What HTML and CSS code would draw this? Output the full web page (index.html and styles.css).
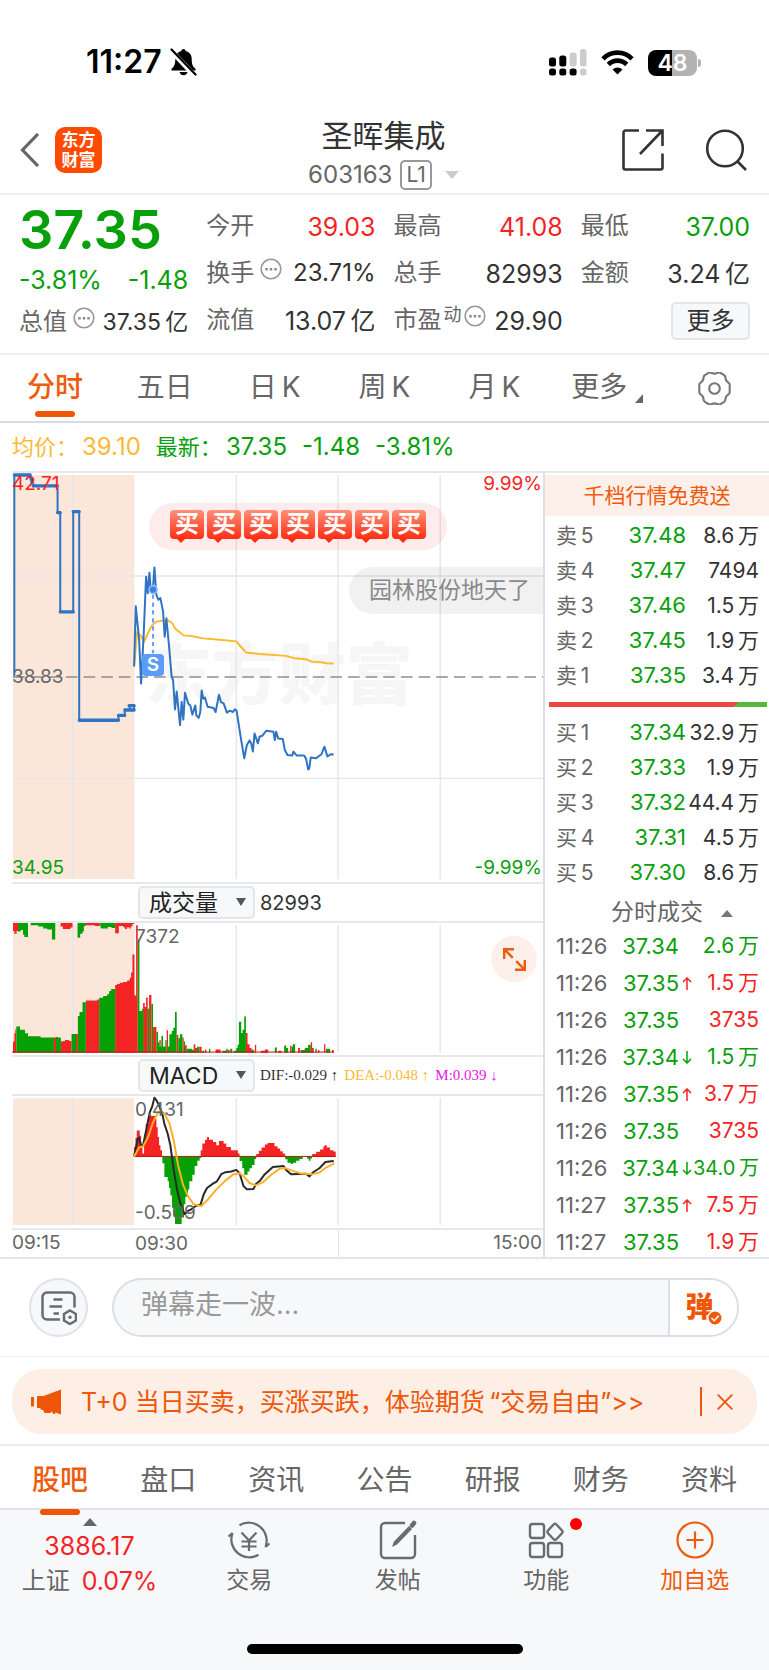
FILE: index.html
```html
<!DOCTYPE html>
<html lang="zh-CN">
<head>
<meta charset="utf-8">
<meta name="viewport" content="width=device-width, initial-scale=1">
<title>圣晖集成 603163</title>
<link rel="stylesheet" href="styles.css">
</head>
<body>
<div class="app">

<div class="status">
  <div class="status-left">
    <span class="clock">11:27</span>
    <svg class="bell" width="27" height="28" viewBox="0 0 27 28"><path d="M13.500 1c1.300 0 2 .8 2.200 1.900 4 1 6 4.100 6 8.100 0 5 1 7.500 3.600 9.700.8.900.4 1.800-.8 1.800H2.500c-1.200 0-1.600-.9-.8-1.800C4.300 18.500 5.300 16 5.300 11c0-4 2-7.100 6-8.100C11.500 1.800 12.200 1 13.500 1z"/><path d="M9.500 24h8c-.5 2-2 3.300-4 3.300s-3.500-1.300-4-3.300z"/><path d="M0 1.500 25 28" stroke="#fff" stroke-width="5"/><path d="M1.500 1.500 25.500 26.500" stroke="#000" stroke-width="2.200" stroke-linecap="round"/></svg>
  </div>
  <div class="status-right">
    <svg width="38" height="27" viewBox="0 0 38 27"><g fill="#000"><rect y="8.500" width="7" height="9" rx="2.500"/><rect x="10.300" y="6.500" width="7" height="11" rx="2.500"/><rect y="19.500" width="7" height="7" rx="2.500"/><rect x="10.300" y="19.500" width="7" height="7" rx="2.500"/><rect x="20.600" y="19.500" width="7" height="7" rx="2.500"/></g><g fill="#ccc"><rect x="20.600" y="3.500" width="7" height="14" rx="2.500"/><rect x="31" y="0" width="6.500" height="17.500" rx="2.500"/><rect x="31" y="19.500" width="6.500" height="7" rx="2.500"/></g></svg>
    <svg width="33" height="25" viewBox="0 0 33 25" fill="none" stroke="#000" stroke-width="4.600"><path d="M2 8.800C10 .6 23 .6 31 8.800"/><path d="M7.300 14.500c5.200-5.200 13.200-5.200 18.400 0"/><path d="M16.500 24.500l-5-5c2.800-2.800 7.200-2.800 10 0z" fill="#000" stroke="none"/></svg>
    <div class="battery"><span class="battery-text">48</span></div>
  </div>
</div>

<header class="header">
  <div class="header-side">
    <button class="icon-btn back" aria-label="返回"><svg width="20" height="34" viewBox="0 0 20 34" fill="none" stroke="#666" stroke-width="3.200"><path d="M18 1 2.500 17 18 33"/></svg></button>
    <a class="logo" href="#"><span>东方</span><span>财富</span></a>
  </div>
  <div class="header-title">
    <h1>圣晖集成</h1>
    <div class="code"><span>603163</span><span class="level">L1</span><svg width="14" height="8" viewBox="0 0 14 8"><path d="M0 0h14L7 8z" fill="#ccc"/></svg></div>
  </div>
  <div class="header-side header-actions">
    <button class="icon-btn" aria-label="分享"><svg width="42" height="42" viewBox="0 0 42 42" fill="none" stroke="#333" stroke-width="2.600"><path d="M17 1.500H3.500a2 2 0 0 0-2 2v35a2 2 0 0 0 2 2h35a2 2 0 0 0 2-2V24.500"/><path d="M24 1.500h16.500V17M40.500 1.500 18 25"/></svg></button>
    <button class="icon-btn" aria-label="搜索"><svg width="41" height="42" viewBox="0 0 41 42" fill="none" stroke="#333" stroke-width="2.600"><circle cx="19" cy="19.500" r="17.800"/><path d="m31 32 9 9"/></svg></button>
  </div>
</header>

<section class="quote">
  <div class="quote-main">
    <strong class="price">37.35</strong>
    <div class="pair change"><span>-3.81%</span><span>-1.48</span></div>
    <div class="pair"><span class="k">总值<svg class="dots" width="22" height="22" viewBox="0 0 22 22"><circle cx="11" cy="11" r="9.800" fill="none" stroke="#999" stroke-width="1.600"/><path d="M5.300 10h2.400v2.400H5.300zm4.500 0h2.400v2.400H9.800zm4.500 0h2.400v2.400h-2.400z" fill="#888"/></svg></span><span class="small">37.35&thinsp;亿</span></div>
  </div>
  <div class="quote-col">
    <div class="pair"><span class="k">今开</span><span class="up">39.03</span></div>
    <div class="pair"><span class="k">换手<svg class="dots" width="22" height="22" viewBox="0 0 22 22"><circle cx="11" cy="11" r="9.800" fill="none" stroke="#999" stroke-width="1.600"/><path d="M5.300 10h2.400v2.400H5.300zm4.500 0h2.400v2.400H9.800zm4.500 0h2.400v2.400h-2.400z" fill="#888"/></svg></span><span class="small">23.71%</span></div>
    <div class="pair"><span class="k">流值</span><span>13.07&thinsp;亿</span></div>
  </div>
  <div class="quote-col">
    <div class="pair"><span class="k">最高</span><span class="up">41.08</span></div>
    <div class="pair"><span class="k">总手</span><span>82993</span></div>
    <div class="pair"><span class="k">市盈<sup>动</sup><svg class="dots" width="22" height="22" viewBox="0 0 22 22"><circle cx="11" cy="11" r="9.800" fill="none" stroke="#999" stroke-width="1.600"/><path d="M5.300 10h2.400v2.400H5.300zm4.500 0h2.400v2.400H9.800zm4.500 0h2.400v2.400h-2.400z" fill="#888"/></svg></span><span>29.90</span></div>
  </div>
  <div class="quote-col">
    <div class="pair"><span class="k">最低</span><span class="down">37.00</span></div>
    <div class="pair"><span class="k">金额</span><span>3.24&thinsp;亿</span></div>
    <div class="pair end"><button class="more">更多</button></div>
  </div>
</section>

<nav class="periods">
  <button class="period active">分时</button>
  <button class="period">五日</button>
  <button class="period">日&thinsp;K</button>
  <button class="period">周&thinsp;K</button>
  <button class="period">月&thinsp;K</button>
  <button class="period">更多<svg class="corner" width="8" height="9" viewBox="0 0 8 9"><path d="M8 0v9H0z" fill="#666"/></svg></button>
  <button class="period" aria-label="设置"><svg width="33" height="33" viewBox="2 2 28 28" fill="none" stroke="#777" stroke-width="1.800"><path d="M11.200 2.600c1.600-.9 2.700.8 4.800.8s3.200-1.700 4.800-.8l3.400 2c1.600 1 .7 2.700 1.700 4.500s3 1.800 3 3.700v6.400c0 1.900-2 1.900-3 3.700s-.1 3.500-1.700 4.500l-3.400 2c-1.600.9-2.700-.8-4.800-.8s-3.200 1.700-4.800.8l-3.400-2c-1.600-1-.7-2.700-1.700-4.500s-3-1.800-3-3.700v-6.400c0-1.900 2-1.900 3-3.700s.1-3.500 1.700-4.500z"/><circle cx="16" cy="16" r="4.500"/></svg></button>
</nav>

<div class="legend">
  <span class="pairing avg"><span class="legend-name">均价：</span>39.10</span><span class="pairing"><span class="legend-name">最新：</span>37.35</span><span>-1.48</span><span>-3.81%</span>
</div>

<main class="market">
  <div class="charts">
    <div class="chart chart-price">
      <div class="watermark">东方财富</div>
      <svg viewBox="36 156 1596 1239" preserveAspectRatio="none">
        <path class="preopen" d="M39 162H404V1386H39z"/>
        <path class="grid" d="M219 162V1386M710 162V1386M1016 162V1386M1323 162V1386M39 468H1632M39 1081H1632"/>
        <path d="M39 774H1632" stroke="#8e8e8e" stroke-width="5" stroke-dasharray="35 18" fill="none"/>
        <path class="avg-line" d="M403 742 412 640 424 650 432 668 455 620 468 607 490 603 505 603 517 610 527 628 552 648 575 650 610 657 660 661 710 666 722 680 740 700 780 704 860 710 885 717 920 720 935 727 965 729 980 732 1003 733"/>
        <path class="price-line" d="M43 772V162H90L100 195H173V276H181V577H220V273H238V905H356V890H375V874H390V862H403M390 874H403V857"/>
        <path class="price-dots" d="M43 162H90L100 195H173M173 276H181M181 577H220M220 273H238M238 905H356M356 890H375M375 874H403M388 861H403"/>
        <path class="price-line" d="M403 742 408 560 418 660 424 794 432 640 439 470 444 520 449 458 453 510 460 500 464 442 470 525 476 540 482 535 490 575 495 652 500 596 508 680 516 775 520 782 526 872 531 818 541 920 546 850 551 903 556 822 566 855 572 860 578 888 587 860 590 890 597 898 602 880 606 815 611 840 616 836 624 864 642 868 648 880 658 828 664 850 672 854 682 882 690 876 700 880 706 872 711 876 724 960 734 1020 742 980 750 966 755 975 760 1000 765 945 775 975 780 955 788 952 800 937 822 940 826 965 830 940 836 960 850 962 856 995 864 1010 878 1012 882 1000 892 1012 914 1012 920 1022 926 1054 929 1052 934 1018 950 1020 966 1008 975 985 984 1015 994 1008 1003 1009"/>
        <path d="M460 524V702" stroke="#5f9ff5" stroke-width="6" stroke-dasharray="13 11" fill="none"/>
        <circle cx="460" cy="509" r="12" fill="#3a82e8" stroke="#8fbcfa" stroke-width="5"/>
      </svg>
      <span class="lab tl up">42.71</span><span class="lab tr up">9.99%</span>
      <span class="lab ml">38.83</span>
      <span class="lab bl down">34.95</span><span class="lab br down">-9.99%</span>
      <span class="sell-mark">S</span>
      <div class="bullet bullet-red"><b>买</b><b>买</b><b>买</b><b>买</b><b>买</b><b>买</b><b>买</b></div>
      <div class="bullet bullet-gray">园林股份地天了</div>
    </div>

    <div class="tool">
      <select class="pick" aria-label="指标一"><option>成交量</option></select>
      <span class="tool-value">82993</span>
    </div>

    <div class="chart chart-volume">
      <svg viewBox="36 549 1596 402" preserveAspectRatio="none">
        <path class="preopen" d="M39 552H404V944H39z"/>
        <path class="grid" d="M219 552V944M710 556V944M1016 556V944M1323 556V944"/>
        <path class="r" d="M39 549H54V573H50V582H43V573H39zM182 549H218V563H212V567H189V560H182zM256 549H300V558H285V556H256zM346 549H403V552H398V560H393V566H388V562H382V567H376V562H370V558H357V580H346zM39 944V910H43V885H46V873H49V944zM56 944V866H59V944zM162 944V898H168V896H174V901H178V944zM183 944V909H195V905H208V908H215V944zM228 944V887H234V944zM258 944V785H292V782H298V944zM346 944V738H352V735H360V731H370V729H382V724H390V716H394V700H398V645H404V770H409V944zM409 944V556H414V944zM430 944V793H435V805H439V776H444V944zM448 944V768H455V944zM460 944V866H470V944zM479 944V905H483V944zM501 944V876H505V944zM531 944V890H536V944zM540 944V901H543V944zM548 944V898H552V944zM556 944V921H561V944zM582 944V918H587V930H592V944zM600 944V926H606V944zM616 944V934H620V944zM648 944V934H663V944zM684 944V936H690V944zM738 944V884H744V918H750V930H756V938H764V944zM766 944V920H770V944zM784 944V938H796V934H806V944zM836 944V938H846V944zM872 944V922H876V944zM896 944V930H902V944zM934 944V912H938V930H943V944zM956 944V936H960V944zM974 944V918H978V944zM998 944V936H1003V944z"/>
        <path class="g" d="M54 549H84V592H73V585H69V570H62V575H54zM92 549H166V599H156V569H142V566H130V560H115V556H92zM233 549H257V559H252V575H248V582H241V594H233zM300 549H346V564H335V561H324V566H303zM49 944V864H60V874H75V885H84V894H122V898H162V944zM168 944V898H183V944zM215 944V887H229V944zM234 944V832H239V820H248V790H258V944zM298 944V777H310V771H322V766H328V756H334V750H346V944zM414 944V600H419V817H427V810H431V944zM443 944V810H448V944zM455 944V796H460V944zM470 944V880H475V912H479V926H485V893H490V925H497V905H501V944zM505 944V925H509V888H516V878H521V868H526V820H531V944zM536 944V900H541V888H548V944zM552 944V910H556V944zM561 944V932H578V936H584V944zM592 944V926H600V944zM608 944V938H614V944zM628 944V932H632V944zM668 944V938H680V932H684V944zM692 944V932H698V944zM702 944V938H710V930H714V920H718V850H725V884H729V874H734V834H739V944zM756 944V934H762V944zM826 944V928H832V944zM854 944V922H860V930H866V944zM876 944V926H880V918H887V944zM904 944V936H916V930H926V920H934V944zM948 944V932H952V944zM980 944V932H992V944z"/>
        <path d="M36 942H1003" stroke="#c00d0d" stroke-width="3"/>
      </svg>
      <span class="lab open-top">7372</span>
      <button class="expand" aria-label="全屏"><svg width="23" height="23" viewBox="0 0 23 23" fill="none" stroke="#ef5b0c" stroke-width="2.400"><path d="M1.200 11V1.200H11M1.200 1.200l8.600 8.600M21.800 12v9.800H12M21.800 21.800l-8.600-8.600"/></svg></button>
    </div>

    <div class="tool">
      <select class="pick" aria-label="指标二"><option>MACD</option></select>
      <span class="macd-values"><span>DIF:-0.029 ↑</span><span class="avg">DEA:-0.048 ↑</span><span class="mag">M:0.039 ↓</span></span>
    </div>

    <div class="chart chart-macd">
      <svg viewBox="-324 15 1596 402" preserveAspectRatio="none">
        <path class="preopen" d="M-321 22H43V408H-321z"/>
        <path class="grid" d="M-141 22V408M350 22V408M656 22V408M963 22V408"/>
        <path class="r" d="M43 200V170H47V142H51V120H60V136H64V170H68V190H73V140H78V100H86V71H94V76H106V85H110V110H114V140H118V165H122V180H127V200zM243 200V180H248V160H256V148H262V140H268V148H280V155H290V165H298V152H312V160H320V170H334V180H355V190H360V200zM410 200V192H418V182H426V172H436V163H444V158H465V168H474V175H482V183H490V190H497V200zM578 200V192H590V185H602V178H612V168H616V165H622V172H632V180H642V184H649V200z"/>
        <path class="g" d="M128 199V220H134V262H144V275H148V295H152V318H157V355H161V382H166V405H186V385H193V345H197V322H205V300H209V275H218V255H225V228H233V212H240V204H245V199zM360 199V213H368V235H374V255H384V245H390V235H397V225H405V207H410V199zM497 199V208H504V218H514V222H520V218H530V212H540V207H550V199zM563 199V206H568V212H573V205H578V199z"/>
        <path d="M43 199H649" stroke="#c01010" stroke-width="3"/>
        <path class="dif" d="M43 199 50 165 54 145 58 142 64 165 70 165 78 125 90 65 98 45 104 20 110 28 120 48 128 70 134 100 144 130 152 165 162 240 172 300 184 350 195 375 205 365 215 360 228 350 243 345 252 315 262 295 280 282 292 275 305 253 318 247 335 245 350 240 360 250 372 290 382 299 402 298 410 282 422 272 436 253 460 231 492 228 500 240 515 253 560 252 570 260 580 248 600 235 618 216 643 213"/>
        <path class="dea" d="M43 199 58 172 70 168 85 140 100 95 115 65 125 62 135 70 150 100 162 150 175 225 190 285 205 320 222 345 245 350 265 330 290 300 315 275 340 254 360 250 375 262 390 280 408 287 430 278 455 255 480 237 495 234 520 243 545 251 580 253 600 248 620 233 645 220"/>
      </svg>
      <span class="lab open-top">0.431</span><span class="lab open-bottom">-0.509</span>
    </div>
    <div class="axis"><span class="axis-a">09:15</span><span class="axis-b">09:30</span><span class="axis-c">15:00</span></div>
  </div>

  <aside class="book">
    <a class="promo" href="#">千档行情免费送</a>
    <table class="depth">
      <tr><th>卖&thinsp;5</th><td class="down">37.48</td><td>8.6&thinsp;万</td></tr>
      <tr><th>卖&thinsp;4</th><td class="down">37.47</td><td>7494</td></tr>
      <tr><th>卖&thinsp;3</th><td class="down">37.46</td><td>1.5&thinsp;万</td></tr>
      <tr><th>卖&thinsp;2</th><td class="down">37.45</td><td>1.9&thinsp;万</td></tr>
      <tr><th>卖&thinsp;1</th><td class="down">37.35</td><td>3.4&thinsp;万</td></tr>
    </table>
    <div class="ratio"></div>
    <table class="depth">
      <tr><th>买&thinsp;1</th><td class="down">37.34</td><td>32.9&thinsp;万</td></tr>
      <tr><th>买&thinsp;2</th><td class="down">37.33</td><td>1.9&thinsp;万</td></tr>
      <tr><th>买&thinsp;3</th><td class="down">37.32</td><td>44.4&thinsp;万</td></tr>
      <tr><th>买&thinsp;4</th><td class="down">37.31</td><td>4.5&thinsp;万</td></tr>
      <tr><th>买&thinsp;5</th><td class="down">37.30</td><td>8.6&thinsp;万</td></tr>
    </table>
    <button class="ticks-head">分时成交<svg width="12" height="7" viewBox="0 0 12 7"><path d="M6 0l6 7H0z" fill="#777"/></svg></button>
    <table class="ticks">
      <tr><th>11:26</th><td class="down">37.34</td><td></td><td class="down">2.6&thinsp;万</td></tr>
      <tr><th>11:26</th><td class="down">37.35</td><td class="up"><svg class="arr" viewBox="0 0 10 13"><path d="M5 13V1M1 5l4-4 4 4"/></svg></td><td class="up">1.5&thinsp;万</td></tr>
      <tr><th>11:26</th><td class="down">37.35</td><td></td><td class="up">3735</td></tr>
      <tr><th>11:26</th><td class="down">37.34</td><td class="down"><svg class="arr" viewBox="0 0 10 13"><path d="M5 0v12M1 8l4 4 4-4"/></svg></td><td class="down">1.5&thinsp;万</td></tr>
      <tr><th>11:26</th><td class="down">37.35</td><td class="up"><svg class="arr" viewBox="0 0 10 13"><path d="M5 13V1M1 5l4-4 4 4"/></svg></td><td class="up">3.7&thinsp;万</td></tr>
      <tr><th>11:26</th><td class="down">37.35</td><td></td><td class="up">3735</td></tr>
      <tr><th>11:26</th><td class="down">37.34</td><td class="down"><svg class="arr" viewBox="0 0 10 13"><path d="M5 0v12M1 8l4 4 4-4"/></svg></td><td class="down long">34.0&thinsp;万</td></tr>
      <tr><th>11:27</th><td class="down">37.35</td><td class="up"><svg class="arr" viewBox="0 0 10 13"><path d="M5 13V1M1 5l4-4 4 4"/></svg></td><td class="up">7.5&thinsp;万</td></tr>
      <tr><th>11:27</th><td class="down">37.35</td><td></td><td class="up">1.9&thinsp;万</td></tr>
    </table>
  </aside>
</main>

<section class="comment">
  <button class="round" aria-label="弹幕设置"><svg width="36" height="34" viewBox="0 0 36 34" fill="none" stroke="#6b6b6b" stroke-width="2.500"><path d="M19 28.500H6a4.500 4.500 0 0 1-4.500-4.500V6A4.500 4.500 0 0 1 6 1.500h23A4.500 4.500 0 0 1 33.500 6v10.500"/><path d="M12.500 8.500h9M8.500 15.500h12.500M12.500 22.500H18"/><path d="m29 19.500 6 3.500v6.500L29 33l-6-3.500V23z"/><circle cx="29" cy="26.200" r="1" fill="#6b6b6b" stroke-width="1.500"/></svg></button>
  <div class="field">
    <input type="text" placeholder="弹幕走一波..." aria-label="弹幕">
    <button class="danmu" aria-label="弹幕开关">弹<svg width="16" height="16" viewBox="0 0 16 16"><circle cx="8" cy="8" r="7.200" fill="#ef5b0c" stroke="#fff" stroke-width="1.400"/><path d="m4.500 8 2.700 2.700 4.500-5" stroke="#fff" stroke-width="1.600" fill="none"/></svg></button>
  </div>
</section>

<section class="banner-wrap">
  <div class="banner">
    <svg width="31" height="26" viewBox="0 0 31 26" fill="#ef5607"><path d="M0 8h3v9.500H0zM6 7h6.500L30 .5v25l-5.500-2v1L22 25l-1-3-1.500 2h-6L12 21H10.500L9 19H6z"/></svg>
    <a href="#">T+0 当日买卖，买涨买跌，体验期货&thinsp;“交易自由”&gt;&gt;</a>
    <button class="close" aria-label="关闭"><svg width="16" height="16" viewBox="0 0 16 16" fill="none" stroke="#ef5607" stroke-width="1.800"><path d="m.7.7 14.600 14.600M15.300.7.7 15.300"/></svg></button>
  </div>
</section>

<nav class="topics">
  <a class="topic active" href="#">股吧</a><a class="topic" href="#">盘口</a><a class="topic" href="#">资讯</a><a class="topic" href="#">公告</a><a class="topic" href="#">研报</a><a class="topic" href="#">财务</a><a class="topic" href="#">资料</a>
</nav>

<footer class="dock">
  <div class="dock-row">
    <a class="index" href="#">
      <svg width="14" height="8" viewBox="0 0 14 8"><path d="M7 0l7 8H0z" fill="#666"/></svg>
      <span class="up">3886.17</span>
      <span class="index-line"><span>上证</span><span class="up">0.07%</span></span>
    </a>
    <a class="act" href="#"><svg width="44" height="40" viewBox="0 0 44 40" fill="none" stroke="#6b6b6b" stroke-width="2.200"><path d="M12.500 5.200A18 18 0 0 1 38.500 27l4-3.500M31.500 34.800A18 18 0 0 1 5.500 13l-4 3.500"/><path d="M14.500 12.500 22 20.500l7.500-8M22 20.500V31M14.500 21.500h15M14.500 26.500h15"/></svg><span>交易</span></a>
    <a class="act" href="#"><svg width="40" height="40" viewBox="0 0 40 40" fill="none" stroke="#6b6b6b" stroke-width="2.400"><path d="M27 3H7a4 4 0 0 0-4 4v27a4 4 0 0 0 4 4h26a4 4 0 0 0 4-4V15"/><path d="m14 27 2-5.500L31 6l3 3-15 15.500z" fill="#6b6b6b" stroke="none"/><path d="m34 5.500 2-2.500" stroke-width="4.500" stroke-linecap="round"/></svg><span>发帖</span></a>
    <a class="act" href="#"><svg width="40" height="40" viewBox="0 0 40 40" fill="none" stroke="#6b6b6b" stroke-width="2.400"><rect x="4" y="4" width="14" height="14" rx="2.500"/><rect x="4" y="23" width="14" height="14" rx="2.500"/><rect x="22" y="23" width="14" height="14" rx="2.500"/><path d="M27.600 4.500a2 2 0 0 1 2.800 0l5.600 6a2 2 0 0 1 0 2.700l-5.600 6a2 2 0 0 1-2.800 0l-5.600-6a2 2 0 0 1 0-2.700z"/></svg><i class="badge"></i><span>功能</span></a>
    <a class="act add" href="#"><svg width="40" height="40" viewBox="0 0 40 40" fill="none" stroke="#ef5b0c" stroke-width="2.200"><circle cx="20" cy="20" r="17.500"/><path d="M20 11.500v17M11.500 20h17"/></svg><span>加自选</span></a>
  </div>
  <div class="home"></div>
</footer>
</div>
</body>
</html>
```
FILE: styles.css
```css
*{box-sizing:border-box}
body{margin:0;background:#fff;color:#333;font-family:Inter,"Noto Sans CJK SC","Liberation Sans",sans-serif;font-size:24px;line-height:1.2}
button,input,select{font:inherit;color:inherit;background:none;border:0;padding:0;margin:0}
a{color:inherit;text-decoration:none}
svg{display:block;flex:none}
h1{margin:0}
.app{display:flex;flex-direction:column;min-height:100vh}
.up{color:#f52424}
.down{color:#07a00b}
.avg{color:#fdb933}
.mag{color:#e814e8}

.status{display:flex;justify-content:space-between;align-items:center;height:108px;padding:17px 72px 0 86px}
.status-left,.status-right{display:flex;align-items:center}
.status-left{gap:8px}
.status-right{gap:14px}
.clock{font-size:32px;font-weight:600;color:#000}
.battery{position:relative;width:49px;height:26px;border-radius:8px;background:linear-gradient(90deg,#000 48%,#b3b3b3 48%);color:#fff;text-align:center;line-height:26px}
.battery::after{content:"";position:absolute;right:-4px;top:9px;width:3px;height:8px;border-radius:0 3px 3px 0;background:#b3b3b3}
.battery-text{font-size:23px;font-weight:600}

.header{display:flex;align-items:center;height:87px;padding:0 22px 2px 20px;border-bottom:2px solid #ededed}
.header-side{display:flex;flex:1;align-items:center;gap:14px}
.header-actions{justify-content:flex-end;gap:42px}
.back{padding-right:1px}
.logo{display:flex;flex-direction:column;align-items:center;justify-content:center;width:47px;height:46px;border-radius:10px;background:#ff4b00;color:#fff;font-size:17px;font-weight:700;line-height:20px}
.header-title{display:flex;flex-direction:column;align-items:center;padding-top:9px}
.header-title h1{font-size:31px;font-weight:400;line-height:42px}
.code{display:flex;align-items:center;gap:8px;height:37px;font-size:24px;color:#666}
.code svg{margin-left:5px}
.level{padding:0 4px;border:2px solid #999;border-radius:5px;font-size:21px;line-height:26px}

.quote{display:grid;grid-template-columns:repeat(4,minmax(0,1fr));gap:18px;padding:8px 19px 9px;border-bottom:2px solid #ededed}
.quote-main{display:grid;grid-template-rows:53px 47px 39px;color:#333}
.quote-col{display:grid;grid-template-rows:repeat(3,47px);font-size:25px}
.price{align-self:center;font-size:54px;font-weight:600;line-height:53px;color:#07a00b}
.pair{display:flex;align-items:center;justify-content:space-between;white-space:nowrap}
.pair.end{justify-content:flex-end}
.pair .small{font-size:24px}
.quote-main .small{font-size:23px}
.change{color:#07a00b;font-size:25px}
.k{display:flex;align-items:center;gap:6px;color:#666;font-size:24px}
.k sup{margin:0 -4px 12px -4px;font-size:18px;line-height:1}
.dots{margin-bottom:10px}
.more{width:79px;height:38px;border:2px solid #e3e5ea;border-radius:5px;background:#f7f8fa;font-size:24px;line-height:34px}

.periods{display:grid;grid-template-columns:repeat(7,minmax(0,1fr));height:68px;border-bottom:2px solid #d9dce4}
.period{position:relative;display:flex;align-items:center;justify-content:center;font-size:28px;color:#666}
.period.active,.topic.active{color:#ef5b0c;font-weight:500}
.period.active::after,.topic.active::after{content:"";position:absolute;left:50%;bottom:4px;width:40px;height:6px;margin-left:-20px;border-radius:3px;background:#ef5607}
.corner{margin:20px -6px 0 8px}

.legend{display:flex;align-items:center;gap:15px;height:48px;padding:0 12px;font-size:24px;color:#07a00b;white-space:nowrap}
.pairing{display:flex;align-items:center;gap:4px}
.legend-name{font-size:22px}

.market{display:grid;grid-template-columns:minmax(0,1fr) 224px;padding-left:12px;border-bottom:2px solid #e3e4ea}
.charts{border-right:2px solid #dcdfe6;min-width:0}
.chart{position:relative;border:solid #e6e8ec;border-width:2px 0;overflow:hidden}
.chart>svg{position:relative;width:100%;height:100%}
.chart-price{height:413px}
.chart-volume{height:136px}
.chart-macd{height:136px}
.preopen{fill:#fbe6da}
.grid{fill:none;stroke:#e3e5ee;stroke-width:4}
.price-line{fill:none;stroke:#2e74c2;stroke-width:6;stroke-linejoin:round}
.price-dots{fill:none;stroke:#2e74c2;stroke-width:10;stroke-linecap:round}
.avg-line{fill:none;stroke:#fdb933;stroke-width:6}
.r{fill:#f52424}
.g{fill:#05a005}
.dif,.dea{fill:none;stroke:#292929;stroke-width:6;stroke-linejoin:round}
.dea{stroke:#fdb027}
.watermark{position:absolute;left:25%;top:162px;color:#f6f6f6;font-size:67px;font-weight:900;line-height:80px;white-space:nowrap}
.lab{position:absolute;font-size:19px;line-height:24px;color:#666}
.lab.up{color:#f52424}
.lab.down{color:#07a00b}
.tl{left:0;top:-1px}
.tr{right:1px;top:-1px}
.ml{left:0;top:192px}
.bl{left:0;bottom:2px}
.br{right:1px;bottom:2px}
.open-top{left:123px;top:2px}
.open-bottom{left:123px;bottom:3px}
.sell-mark{position:absolute;left:130px;top:181px;width:22px;height:22px;border-radius:4px;background:#5a9cf9;color:#fff;font-size:19px;font-weight:600;line-height:22px;text-align:center}
.bullet{position:absolute;height:47px;border-radius:24px;white-space:nowrap}
.bullet-red{display:flex;gap:3px;left:137px;top:30px;padding:7px 21px;background:rgba(246,60,60,.1)}
.bullet-red b{position:relative;width:34px;height:29px;border-radius:4px;background:linear-gradient(#ff9078,#ff2e12);color:#fff;font-size:24px;line-height:28px;text-align:center}
.bullet-red b::after{content:"";position:absolute;left:7px;top:29px;border:solid transparent;border-width:4px 4px 0;border-top-color:#ff2e12}
.bullet-gray{left:337px;top:94px;padding:0 20px;width:220px;background:rgba(0,0,0,.055);color:#8a8a8a;font-size:23px;line-height:47px}
.tool{position:relative;display:flex;align-items:center;gap:5px;height:37px;padding-left:126px;color:#333}
.tool::after{content:"";position:absolute;left:224px;top:14px;border:solid transparent;border-width:8px 5px 0;border-top-color:#555}
.pick{appearance:none;width:117px;height:33px;padding-left:9px;border:2px solid #e3e5ea;border-radius:5px;color:#222;font-size:23px;line-height:28px;background:#f7f8fa}
.tool-value{font-size:20px}
.macd-values{display:flex;gap:6px;font:15px "Liberation Serif",serif;white-space:nowrap}
.expand{position:absolute;right:6px;top:13px;display:flex;align-items:center;justify-content:center;width:46px;height:46px;border-radius:50%;background:#fdf0ea}
.axis{display:grid;grid-template-columns:123px 204px 1fr;align-items:center;height:27px;font-size:19px;color:#666}
.axis-b{line-height:27px;border-right:1px solid #e3e5ee}
.axis-c{text-align:right;padding-right:1px}

.book{display:flex;flex-direction:column;border-top:2px solid #e6e8ec;color:#333;font-size:21px;white-space:nowrap}
.promo{margin:2px 0;background:#fdf0ea;color:#ef5b0c;font-size:21px;line-height:41px;text-align:center}
table{border-collapse:collapse;table-layout:fixed}
th,td{padding:0;font-weight:400;text-align:right}
th{color:#666;text-align:left}
.depth{width:203px;margin-left:11px}
.depth tr{height:35px}
.depth th{width:60px}
.depth td:nth-child(2){width:70px;font-size:22px}
.ratio{height:5px;margin:9px 2px 8px 4px;background:linear-gradient(135deg,#ea4747 0 85%,#58b73c 85%)}
.ticks-head{display:flex;align-items:center;justify-content:center;gap:18px;height:43px;padding:3px 0 0 30px;font-size:23px;color:#666}
.ticks{width:203px;margin-left:11px;line-height:26px}
.ticks tr{height:37px;vertical-align:top}
.ticks tr:last-child{height:26px}
.ticks th{width:55px;font-size:22px}
.ticks td:nth-child(2){width:68px;font-size:22px}
.ticks td:nth-child(3){width:14px}
.ticks .long{font-size:20px}
.arr{width:10px;height:13px;margin:7px 0 0 3px;fill:none;stroke:currentColor;stroke-width:1.500}

.comment{display:flex;align-items:center;gap:24px;height:98px;padding:0 30px 0 29px;border-bottom:1px solid #f0f0f0}
.round{display:flex;align-items:center;justify-content:center;width:59px;height:59px;border:2px solid #e0e2e9;border-radius:50%;background:#f7f8fa}
.field{display:flex;flex:1;height:59px;border:2px solid #dcdee6;border-radius:30px;overflow:hidden;background:#f7f8fa}
.field input{flex:1;min-width:0;padding:0 27px 4px;font-size:27px}
.field input::placeholder{color:#999;opacity:1}
.danmu{position:relative;width:69px;padding-right:8px;border-left:2px solid #dcdee6;background:#fff;color:#ef5607;font-size:28px;font-weight:900}
.danmu svg{position:absolute;left:37px;bottom:9px}

.banner-wrap{padding:12px 12px 10px;border-bottom:2px solid #ededed}
.banner{display:flex;align-items:center;gap:19px;height:65px;padding:0 24px 0 19px;border-radius:30px;background:#fdeee6;color:#ef5607}
.banner a{flex:1;font-size:25px;white-space:nowrap}
.close{height:29px;padding-left:15px;border-left:2px solid #ef5607}

.topics{display:grid;grid-template-columns:repeat(7,minmax(0,1fr));height:64px;padding:0 6px;border-bottom:2px solid #e1e3e9}
.topic{position:relative;font-size:28px;line-height:68px;text-align:center;color:#666}
.topic.active::after{bottom:-1px}

.dock{display:flex;flex:1;flex-direction:column;justify-content:space-between;align-items:center;padding-bottom:16px;background:#f7f8fa}
.dock-row{display:grid;grid-template-columns:175px repeat(4,minmax(0,1fr));width:100%;padding-top:10px;color:#666}
.index{display:flex;flex-direction:column;align-items:center;gap:5px;margin-top:-2px;padding-left:4px;font-size:25px;line-height:30px}
.index-line{display:flex;gap:12px}
.index-line span:first-child{font-size:24px}
.act{position:relative;display:flex;flex-direction:column;align-items:center;gap:7px;font-size:23px}
.add{color:#ef5b0c}
.badge{position:absolute;left:50%;top:-2px;width:12px;height:12px;margin-left:24px;border-radius:50%;background:#fb0007}
.home{width:276px;height:10px;border-radius:5px;background:#000}
```
